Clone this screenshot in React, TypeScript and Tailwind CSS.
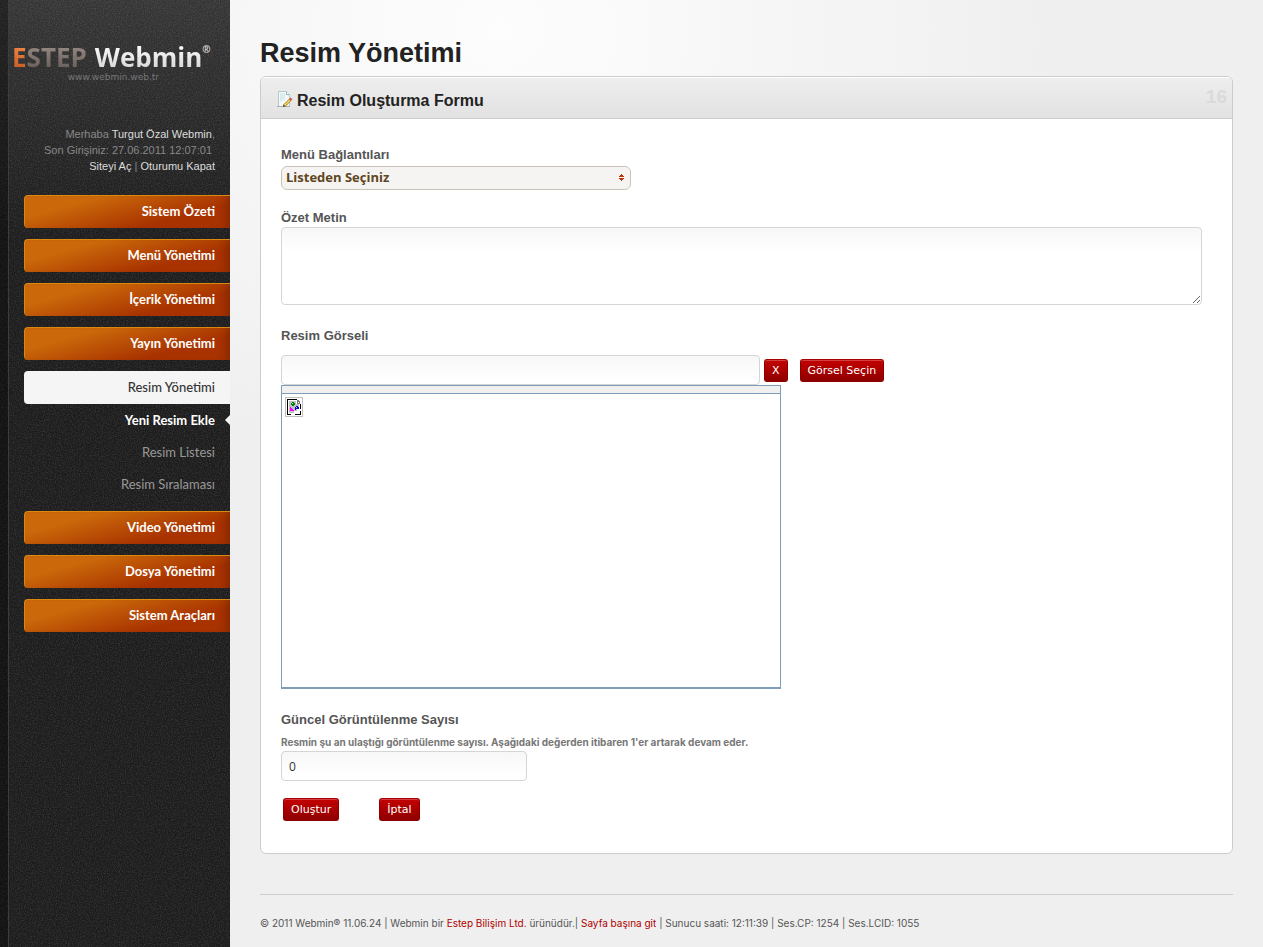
import type { ReactNode } from 'react'

type MenuItem = {
  title: string
  active?: boolean
  children?: { title: string; current?: boolean }[]
}

const menu: MenuItem[] = [
  { title: 'Sistem Özeti' },
  { title: 'Menü Yönetimi' },
  { title: 'İçerik Yönetimi' },
  { title: 'Yayın Yönetimi' },
  {
    title: 'Resim Yönetimi',
    active: true,
    children: [
      { title: 'Yeni Resim Ekle', current: true },
      { title: 'Resim Listesi' },
      { title: 'Resim Sıralaması' },
    ],
  },
  { title: 'Video Yönetimi' },
  { title: 'Dosya Yönetimi' },
  { title: 'Sistem Araçları' },
]

function Grain() {
  return (
    <svg className="pointer-events-none absolute inset-0 h-full w-full" aria-hidden="true">
      <filter id="grain" x="0" y="0" width="100%" height="100%">
        <feTurbulence type="fractalNoise" baseFrequency="0.83" numOctaves="2" seed="4" />
        <feColorMatrix values="0 0 0 0 1  0 0 0 0 1  0 0 0 0 1  0.5 0 0 0 -0.19" />
      </filter>
      <rect width="100%" height="100%" filter="url(#grain)" opacity="0.5" />
    </svg>
  )
}

function PageEditIcon() {
  return (
    <svg className="mb-[3px] h-4 w-4" viewBox="0 0 16 16" aria-hidden="true">
      <path d="M1.5 .5h8l3 3v12h-11z" fill="#f3f9f9" stroke="#b4c8c8" />
      <path d="M3 2h5v6l-5 3z" fill="#dcecec" />
      <path d="M9.5 .5v3h3" fill="#fff" stroke="#9fb5b5" />
      <path d="M0 15.5h13" stroke="#a2b0b0" />
      <path d="M7 15l6-6" stroke="#a8842a" strokeWidth="3" />
      <path d="M7.500 14.500L13 9" stroke="#f5dc62" strokeWidth="1.500" />
      <path d="M12.800 9.200l1.700-1.700" stroke="#d8513c" strokeWidth="2.500" />
      <path d="M6 15.800l.6-2 1.400 1.400z" fill="#222" />
    </svg>
  )
}

function BrokenImageIcon() {
  return (
    <svg className="h-5 w-[18px]" viewBox="0 0 18 20" shapeRendering="crispEdges" aria-hidden="true">
      <path d="M.5 .5h17v19h-17z" fill="#fff" stroke="#c0c0c0" />
      <path d="M4 4h7v3h3v4h-2v3h-3v2H4z" fill="#c0c0c0" />
      <path d="M12 2.500H2.500v15H6M10 17.500h5.500V14M15.500 12V7" fill="none" stroke="#000" />
      <path d="M12 3v3h3M13 3v1h1v1h1" fill="none" stroke="#777" />
      <path d="M7 5h2v1h1v2H9v1H7V8H6V6h1z" fill="#008000" />
      <path d="M11 9h2v1h1v2h-3v1h-1v-3h1z" fill="#0000d0" />
      <path d="M5 10h1v1h1v1h1v1h1v1H5z" fill="#ff00ff" />
      <path d="M11 10h1v1h-1zM7 6h1v1H7z" fill="#8fe0ff" />
    </svg>
  )
}

function RedButton({ type = 'button', children }: { type?: 'button' | 'submit'; children: ReactNode }) {
  return (
    <button
      type={type}
      className="rounded-[3px] border border-[#8e0000] border-t-[#a80000] bg-gradient-to-b from-[#c40000] to-[#8f0000] px-[7px] pt-px font-['DejaVu_Sans',sans-serif] text-[11px] leading-5 text-white shadow-[inset_0_1px_0_#d04040]"
    >
      {children}
    </button>
  )
}

function Sidebar() {
  return (
    <aside className="relative w-[230px] shrink-0 bg-[#1c1c1c] bg-gradient-to-b from-[#353535] to-[#1c1c1c] to-[240px]">
      <Grain />
      <div className="pointer-events-none absolute inset-y-0 left-0 w-[9px] border-r border-[#3c3c3c] bg-black/35" />
      <div className="relative">
        <header className="h-[126px] pt-[43px] pl-3">
          <a href="#" className="flex w-[204px] items-start font-['Open_Sans',sans-serif] text-[26px] leading-7 font-bold">
            <span className="bg-gradient-to-b from-[#f08a4a] to-[#c45a20] bg-clip-text text-transparent">E</span>
            <span className="bg-gradient-to-b from-[#9c8f88] to-[#665b56] bg-clip-text text-transparent">STEP</span>
            <span className="ml-2 bg-gradient-to-b from-white to-[#d4d4d4] bg-clip-text text-transparent">Webmin</span>
            <span className="text-[10px] leading-3 text-[#ddd]">®</span>
          </a>
          <p className="w-[147px] text-right font-['DejaVu_Sans',sans-serif] text-[9px] leading-3 text-[#777]">
            www.webmin.web.tr
          </p>
        </header>

        <div className="pr-[15px] text-right text-[11px] leading-4 text-[#888]">
          <p>
            Merhaba <a href="#" className="text-[#ddd]">Turgut Özal Webmin</a>,
          </p>
          <p className="pr-[3px]">Son Girişiniz: 27.06.2011 12:07:01</p>
          <p>
            <a href="#" className="text-[#ddd]">Siteyi Aç</a> | <a href="#" className="text-[#ddd]">Oturumu Kapat</a>
          </p>
        </div>

        <nav className="mt-[21px] pl-6 font-['Lato',sans-serif] text-[13px]">
          <ul className="flex flex-col gap-[11px]">
            {menu.map((item) => (
              <li key={item.title}>
                <a
                  href="#"
                  className={
                    item.active
                      ? 'block rounded-l-[4px] bg-[#f5f5f5] pr-[15px] text-right leading-[33px] font-medium text-[#333]'
                      : 'block rounded-l-[4px] border-t border-l border-[#dd8612] bg-[linear-gradient(165deg,#ca680a_25%,#a83200_72%)] pr-[15px] pb-[2px] text-right leading-[30px] font-bold text-white shadow-[inset_-10px_0_8px_-6px_rgba(0,0,0,0.2)]'
                  }
                >
                  {item.title}
                </a>
                {item.children && (
                  <ul>
                    {item.children.map((child) => (
                      <li key={child.title} className="flex items-center justify-end">
                        <a
                          href="#"
                          className={child.current ? 'leading-8 font-bold text-white' : 'pr-[15px] leading-8 text-[#999]'}
                        >
                          {child.title}
                        </a>
                        {child.current && (
                          <svg className="ml-[10px] h-[10px] w-[5px]" viewBox="0 0 5 10" aria-hidden="true">
                            <path d="M5 0v10L0 5z" fill="#f5f5f5" />
                          </svg>
                        )}
                      </li>
                    ))}
                  </ul>
                )}
              </li>
            ))}
          </ul>
        </nav>
      </div>
    </aside>
  )
}

const labelClass = 'block text-[13px] leading-4 font-bold text-[#555]'
const fieldClass = 'block rounded-[4px] border border-[#d5d5d5] bg-white bg-gradient-to-b from-[#f7f7f7] to-white to-[24px]'

function ImageForm() {
  return (
    <form className="pt-7 pr-[30px] pb-8 pl-5" onSubmit={(e) => e.preventDefault()}>
      <label htmlFor="menu" className={labelClass}>Menü Bağlantıları</label>
      <div className="relative mt-[3px] w-[350px] max-w-full">
        <select
          id="menu"
          className="block h-6 w-full appearance-none rounded-[6px] border border-[#c9c3b8] bg-[#f5f4f2] px-1 font-['Open_Sans',sans-serif] text-[13px] font-bold text-[#5e4620]"
        >
          <option>Listeden Seçiniz</option>
        </select>
        <svg className="pointer-events-none absolute top-2 right-[7px] h-[7px] w-[5px]" viewBox="0 0 5 7" shapeRendering="crispEdges" aria-hidden="true">
          <path d="M2 0h1v1h1v1h1v1H0V2h1V1h1zM0 4h5v1H4v1H3v1H2V6H1V5H0z" fill="#bb3505" />
        </svg>
      </div>

      <label htmlFor="summary" className={`${labelClass} mt-5`}>Özet Metin</label>
      <textarea id="summary" className={`${fieldClass} mt-px h-[78px] w-full resize`} />

      <label htmlFor="image" className={`${labelClass} mt-[23px]`}>Resim Görseli</label>
      <div className="mt-[11px] flex items-center">
        <input id="image" type="text" className={`${fieldClass} h-[30px] w-[479px]`} />
        <span className="ml-1 flex gap-3">
          <RedButton>X</RedButton>
          <RedButton>Görsel Seçin</RedButton>
        </span>
      </div>
      <div className="h-[304px] w-[500px] max-w-full border border-b-2 border-[#7f9db9]">
        <div className="h-2 border-b border-[#7f9db9] bg-[#f0f0f0]" />
        <div className="pt-[3px] pl-[3px]">
          <BrokenImageIcon />
        </div>
      </div>

      <label htmlFor="views" className={`${labelClass} mt-[23px]`}>Güncel Görüntülenme Sayısı</label>
      <p id="views-hint" className="mt-2 font-['Inter',sans-serif] text-[10px] leading-3 font-bold text-[#777]">
        Resmin şu an ulaştığı görüntülenme sayısı. Aşağıdaki değerden itibaren 1'er artarak devam eder.
      </p>
      <input
        id="views"
        type="text"
        defaultValue="0"
        aria-describedby="views-hint"
        className={`${fieldClass} mt-[3px] h-[30px] w-[246px] px-[7px] font-['Open_Sans',sans-serif] text-[12px] text-[#333]`}
      />

      <div className="mt-[17px] ml-[2px] flex gap-10">
        <RedButton type="submit">Oluştur</RedButton>
        <RedButton>İptal</RedButton>
      </div>
    </form>
  )
}

export default function App() {
  return (
    <div className="flex min-h-screen bg-[#efefef] font-['Liberation_Sans',Arial,sans-serif]">
      <Sidebar />
      <main className="min-w-0 flex-1 bg-[radial-gradient(ellipse_560px_460px_at_270px_30px,#fdfdfd,#efefef)] px-[30px] pt-[37px]">
        <h1 className="text-[27px] leading-8 font-bold text-[#222]">Resim Yönetimi</h1>

        <section className="mt-[7px] overflow-hidden rounded-[6px] border border-[#ccc] bg-white">
          <header className="flex h-[42px] items-center justify-between border-b border-[#ccc] bg-gradient-to-b from-[#eee] to-[#e2e2e2] pr-[5px] pl-4 shadow-[inset_0_1px_0_#fff]">
            <h2 className="flex items-center gap-1 pt-[6px] text-[16px] leading-5 font-bold text-[#222]">
              <PageEditIcon />
              Resim Oluşturma Formu
            </h2>
            <span className="text-[19px] font-bold text-[#dadada]">16</span>
          </header>
          <ImageForm />
        </section>

        <footer className="mt-10 border-t border-[#ccc] pt-5 pb-4 font-['Inter',sans-serif] text-[10px] leading-4 text-[#555]">
          © 2011 Webmin® 11.06.24 | Webmin bir <a href="#" className="text-[#b00000]">Estep Bilişim Ltd.</a> ürünüdür.|{' '}
          <a href="#" className="text-[#b00000]">Sayfa başına git</a> | Sunucu saati: 12:11:39 | Ses.CP: 1254 | Ses.LCID: 1055
        </footer>
      </main>
    </div>
  )
}
